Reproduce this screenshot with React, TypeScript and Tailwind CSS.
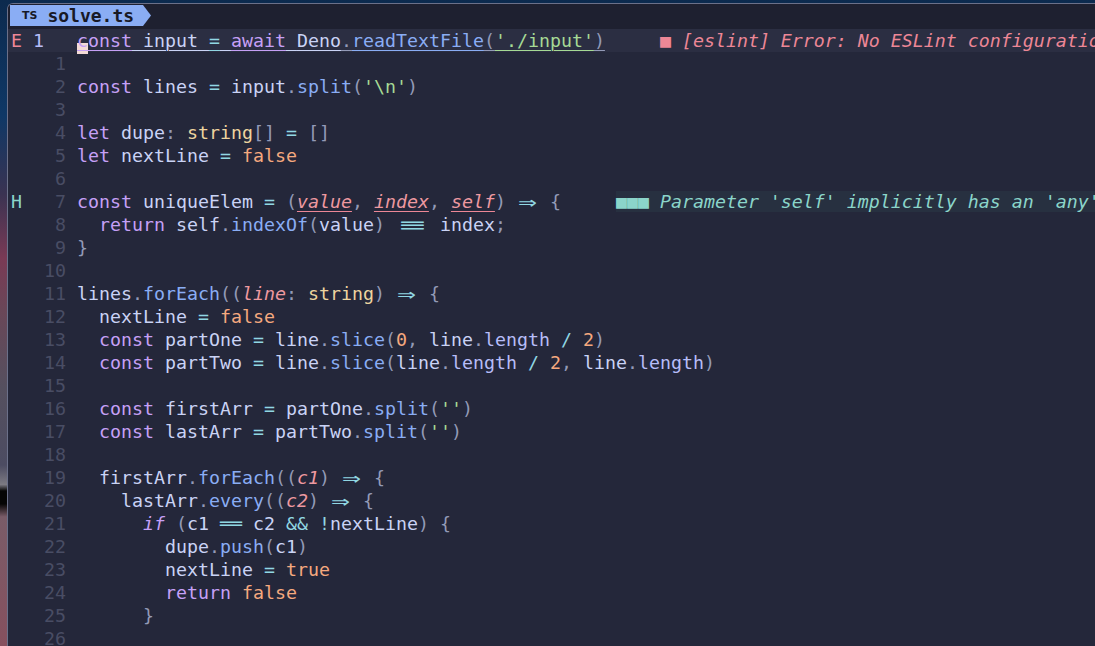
import type { ReactNode } from "react"

// catppuccin macchiato-ish token colours
const kw = "text-[#c6a0f6]"
const tx = "text-[#cad3f5]"
const fn = "text-[#8aadf4]"
const op = "text-[#91d7e3]"
const pu = "text-[#939ab7]"
const st = "text-[#a6da95]"
const nu = "text-[#f5a97f]"
const ty = "text-[#eed49f]"
const pa = "text-[#ee99a0] italic"
const pr = "text-[#b7bdf8]"
const ul = "underline decoration-1 underline-offset-[3px]"
const pul = "underline decoration-[#ed8796] decoration-1 underline-offset-[3px]"

type Tok = [string, string]

type Row = {
  n: string
  sign?: "E" | "H"
  cur?: boolean
  toks: Tok[]
  virt?: ReactNode
}

function Tk({ t }: { t: Tok }) {
  const [text, cls] = t
  if (text === "=>") {
    return (
      <span className={`inline-block w-[22px] text-center ${cls}`}>
        <span className="inline-block scale-x-[1.7] scale-y-[1.15]">⇒</span>
      </span>
    )
  }
  if (text === "===") {
    return (
      <span className={`inline-block w-[33px] text-center ${cls}`}>
        <span className="inline-block scale-x-[2.4]">≡</span>
      </span>
    )
  }
  if (text === "==") {
    return <span className={cls}>══</span>
  }
  return <span className={cls}>{text}</span>
}

const rows: Row[] = [
  {
    n: "1",
    sign: "E",
    cur: true,
    toks: [
      ["onst", `${kw} ${ul}`],
      [" ", `${tx} ${ul}`],
      ["input", `${tx} ${ul}`],
      [" ", `${tx} ${ul}`],
      ["=", `${op} ${ul}`],
      [" ", `${tx} ${ul}`],
      ["await", `${kw} ${ul}`],
      [" ", `${tx} ${ul}`],
      ["Deno", `${tx} ${ul}`],
      [".", `${pu} ${ul}`],
      ["readTextFile", `${fn} ${ul}`],
      ["(", `${pu} ${ul}`],
      ["'./input'", `${st} ${ul}`],
      [")", `${pu} ${ul}`],
    ],
    virt: (
      <span className="text-[#ed8796] italic">
        {"     "}
        <span className="not-italic">■</span> [eslint] Error: No ESLint configuration found in /home/user/aoc
      </span>
    ),
  },
  { n: "1", toks: [] },
  {
    n: "2",
    toks: [
      ["const", kw],
      [" lines ", tx],
      ["=", op],
      [" input", tx],
      [".", pu],
      ["split", fn],
      ["(", pu],
      ["'\\n'", st],
      [")", pu],
    ],
  },
  { n: "3", toks: [] },
  {
    n: "4",
    toks: [
      ["let", kw],
      [" dupe", tx],
      [":", pu],
      [" string", ty],
      ["[]", pu],
      [" ", tx],
      ["=", op],
      [" []", pu],
    ],
  },
  {
    n: "5",
    toks: [
      ["let", kw],
      [" nextLine ", tx],
      ["=", op],
      [" ", tx],
      ["false", nu],
    ],
  },
  { n: "6", toks: [] },
  {
    n: "7",
    sign: "H",
    toks: [
      ["const", kw],
      [" uniqueElem ", tx],
      ["=", op],
      [" (", pu],
      ["value", `${pa} ${pul}`],
      [", ", pu],
      ["index", `${pa} ${pul}`],
      [", ", pu],
      ["self", `${pa} ${pul}`],
      [")", pu],
      [" ", tx],
      ["=>", op],
      [" {", pu],
    ],
    virt: (
      <>
        {"     "}
        <span className="bg-[#273040] pr-[40px] text-[#8bd5ca] italic">
          <span className="not-italic">■■■</span> Parameter 'self' implicitly has an 'any' type.
        </span>
      </>
    ),
  },
  {
    n: "8",
    toks: [
      ["  return", kw],
      [" self", tx],
      [".", pu],
      ["indexOf", fn],
      ["(", pu],
      ["value", tx],
      [")", pu],
      [" ", tx],
      ["===", op],
      [" index", tx],
      [";", pu],
    ],
  },
  { n: "9", toks: [["}", pu]] },
  { n: "10", toks: [] },
  {
    n: "11",
    toks: [
      ["lines", tx],
      [".", pu],
      ["forEach", fn],
      ["((", pu],
      ["line", pa],
      [":", pu],
      [" string", ty],
      [")", pu],
      [" ", tx],
      ["=>", op],
      [" {", pu],
    ],
  },
  {
    n: "12",
    toks: [
      ["  nextLine ", tx],
      ["=", op],
      [" ", tx],
      ["false", nu],
    ],
  },
  {
    n: "13",
    toks: [
      ["  const", kw],
      [" partOne ", tx],
      ["=", op],
      [" line", tx],
      [".", pu],
      ["slice", fn],
      ["(", pu],
      ["0", nu],
      [", ", pu],
      ["line", tx],
      [".", pu],
      ["length", pr],
      [" ", tx],
      ["/", op],
      [" ", tx],
      ["2", nu],
      [")", pu],
    ],
  },
  {
    n: "14",
    toks: [
      ["  const", kw],
      [" partTwo ", tx],
      ["=", op],
      [" line", tx],
      [".", pu],
      ["slice", fn],
      ["(", pu],
      ["line", tx],
      [".", pu],
      ["length", pr],
      [" ", tx],
      ["/", op],
      [" ", tx],
      ["2", nu],
      [", ", pu],
      ["line", tx],
      [".", pu],
      ["length", pr],
      [")", pu],
    ],
  },
  { n: "15", toks: [] },
  {
    n: "16",
    toks: [
      ["  const", kw],
      [" firstArr ", tx],
      ["=", op],
      [" partOne", tx],
      [".", pu],
      ["split", fn],
      ["(", pu],
      ["''", st],
      [")", pu],
    ],
  },
  {
    n: "17",
    toks: [
      ["  const", kw],
      [" lastArr ", tx],
      ["=", op],
      [" partTwo", tx],
      [".", pu],
      ["split", fn],
      ["(", pu],
      ["''", st],
      [")", pu],
    ],
  },
  { n: "18", toks: [] },
  {
    n: "19",
    toks: [
      ["  firstArr", tx],
      [".", pu],
      ["forEach", fn],
      ["((", pu],
      ["c1", pa],
      [")", pu],
      [" ", tx],
      ["=>", op],
      [" {", pu],
    ],
  },
  {
    n: "20",
    toks: [
      ["    lastArr", tx],
      [".", pu],
      ["every", fn],
      ["((", pu],
      ["c2", pa],
      [")", pu],
      [" ", tx],
      ["=>", op],
      [" {", pu],
    ],
  },
  {
    n: "21",
    toks: [
      ["      ", tx],
      ["if", `${kw} italic`],
      [" (", pu],
      ["c1 ", tx],
      ["==", op],
      [" c2 ", tx],
      ["&&", op],
      [" ", tx],
      ["!", op],
      ["nextLine", tx],
      [")", pu],
      [" {", pu],
    ],
  },
  {
    n: "22",
    toks: [
      ["        dupe", tx],
      [".", pu],
      ["push", fn],
      ["(", pu],
      ["c1", tx],
      [")", pu],
    ],
  },
  {
    n: "23",
    toks: [
      ["        nextLine ", tx],
      ["=", op],
      [" ", tx],
      ["true", nu],
    ],
  },
  {
    n: "24",
    toks: [
      ["        return", kw],
      [" ", tx],
      ["false", nu],
    ],
  },
  { n: "25", toks: [["      }", pu]] },
  { n: "26", toks: [] },
]

function CodeRow({ row }: { row: Row }) {
  return (
    <div className={`flex h-[23px] shrink-0 items-center pl-[3px] ${row.cur ? "bg-[#2b2e42]" : ""}`}>
      <div
        className={`w-[22px] shrink-0 ${row.sign === "E" ? "text-[#ed8796]" : "text-[#8bd5ca]"}`}
      >
        {row.sign ?? ""}
      </div>
      <div
        className={`w-[44px] shrink-0 pr-[11px] ${
          row.cur ? "text-left text-[#b7bdf8]" : "text-right text-[#494d64]"
        }`}
      >
        {row.n}
      </div>
      <div className="whitespace-pre">
        {row.cur && (
          <span className="relative inline-block">
            <span className="absolute -bottom-[2px] left-0 h-[11px] w-full bg-[#f4dbd6]"></span>
            <span className={`relative ${kw} ${ul}`}>c</span>
          </span>
        )}
        {row.toks.map((t, i) => (
          <Tk key={i} t={t} />
        ))}
        {row.virt}
      </div>
    </div>
  )
}

export default function App() {
  return (
    <div className="flex h-[646px] w-[1095px] overflow-hidden bg-[linear-gradient(180deg,#0c2a4e_0%,#0f3866_18%,#3a3352_30%,#7a3a55_40%,#6a4758_48%,#55505f_60%,#4c4c62_72%,#7c7a82_75%,#050505_76%,#050505_78%,#7a5c68_80%,#86505e_100%)] pl-[7px] pt-[3px] font-['DejaVu_Sans_Mono',monospace] text-[18.27px] leading-[23px]">
      {/* editor window */}
      <div className="flex min-w-0 flex-1 flex-col overflow-hidden rounded-tl-[6px] border-l border-t border-[#6b7089] bg-[#24273a]">
        {/* tab line */}
        <div className="flex h-[25px] shrink-0 items-start bg-[#1e2030] pl-[2px] pt-[1px]">
          <div className="flex h-[21px] w-[141px] items-center bg-[#8aadf4] pl-[12px] [clip-path:polygon(0_0,calc(100%-8px)_0,100%_50%,calc(100%-8px)_100%,0_100%)]">
            <span className="font-['DejaVu_Sans',sans-serif] text-[11px] font-bold leading-none text-[#181926]">
              TS
            </span>
            <span className="ml-[10px] text-[18px] font-bold leading-none text-[#181926]">solve.ts</span>
          </div>
        </div>

        {/* buffer */}
        <div className="flex flex-col">
          {rows.map((r, i) => (
            <CodeRow key={i} row={r} />
          ))}
        </div>
      </div>
    </div>
  )
}
